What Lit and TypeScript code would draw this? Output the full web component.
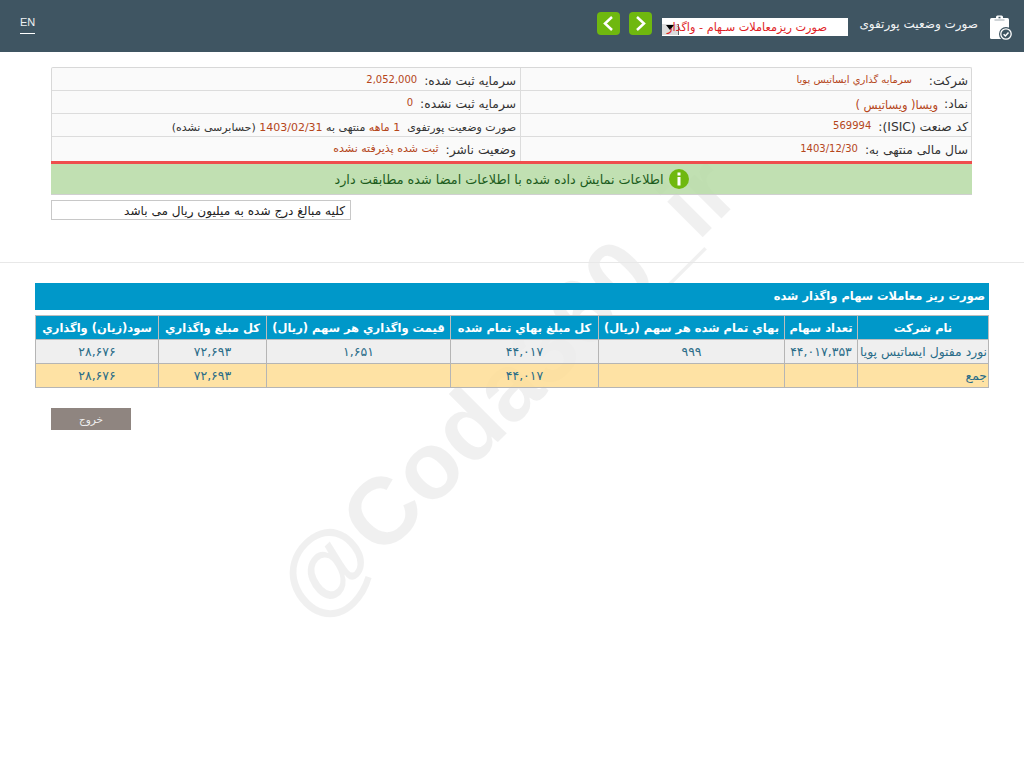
import { LitElement, html, css } from "lit";
import { customElement } from "lit/decorators.js";

const FONT = css`"DejaVu Sans", "Noto Sans", sans-serif`;

const info: [any, any][] = [
  [
    html`<span class="lb">شرکت:</span><span class="val far">سرمایه گذاري ایساتیس پویا</span>`,
    html`<span class="lb">سرمایه ثبت شده:</span><span class="val num" dir="ltr">2,052,000</span>`,
  ],
  [
    html`<span class="lb">نماد:</span><span class="val low">ویسا( ویساتیس )</span>`,
    html`<span class="lb">سرمایه ثبت نشده:</span><span class="val num">0</span>`,
  ],
  [
    html`<span class="lb">کد صنعت (ISIC):</span><span class="val num">569994</span>`,
    html`<span class="tight">صورت وضعیت پورتفوی <span class="red">&nbsp;1 ماهه</span> منتهی به <span class="red">1403/02/31</span> (حسابرسی نشده)</span>`,
  ],
  [
    html`<span class="lb">سال مالی منتهی به:</span><span class="val num" dir="ltr">1403/12/30</span>`,
    html`<span class="lb">وضعیت ناشر:</span><span class="val st">ثبت شده پذیرفته نشده</span>`,
  ],
];

const cols = [131, 73, 186, 148, 184, 108, 123];
const heads = [
  "نام شرکت",
  "تعداد سهام",
  "بهاي تمام شده هر سهم (ریال)",
  "کل مبلغ بهاي تمام شده",
  "قیمت واگذاري هر سهم (ریال)",
  "کل مبلغ واگذاري",
  "سود(زیان) واگذاري",
];
const row1 = ["نورد مفتول ایساتیس پویا", "۴۴,۰۱۷,۳۵۳", "۹۹۹", "۴۴,۰۱۷", "۱,۶۵۱", "۷۲,۶۹۳", "۲۸,۶۷۶"];
const row2 = ["جمع", "", "", "۴۴,۰۱۷", "", "۷۲,۶۹۳", "۲۸,۶۷۶"];

@customElement("app-root")
export class AppRoot extends LitElement {
  static styles = css`
    :host {
      display: block;
      position: relative;
      height: 768px;
      overflow: hidden;
      background: #fff;
      font-family: ${FONT};
      direction: rtl;
      color: #333;
    }
    header {
      position: relative;
      z-index: 1;
      height: 52px;
      background: #3f5562;
      display: flex;
      align-items: flex-start;
      padding: 0 13px 0 20px;
      color: #fff;
    }
    .clip { margin: 15px 0 0 0; width: 22px; height: 25px; overflow: visible; flex: none; }
    .title { margin: 17px 11px 0 0; font-size: 12px; line-height: 14px; width: 130px; color: #f2f4f5; white-space: nowrap; }
    .select {
      margin: 18px 0 0 0;
      width: 186px;
      height: 18px;
      background: #fff;
      position: relative;
      white-space: nowrap;
    }
    .seltext {
      position: absolute;
      right: 21px;
      top: 0;
      color: #e01b24;
      font-size: 11.3px;
      line-height: 20px;
      z-index: 1;
    }
    .arrow {
      position: absolute;
      left: 0;
      top: 6px;
      width: 16px;
      height: 11px;
      background: #dcdcdc;
      border-right: 1px solid #666;
    }
    .arrow::after {
      content: "";
      position: absolute;
      left: 4px;
      top: 1px;
      border: 4px solid transparent;
      border-top: 5px solid #000;
      border-bottom: 0;
    }
    .nav { margin: 12px 10px 0 0; width: 23px; height: 23px; border-radius: 4px; background: #6fb80f; display: flex; align-items: center; justify-content: center; }
    .nav + .nav { margin-right: 9px; }
    .en { margin-right: auto; margin-top: 15px; font-size: 11px; line-height: 15px; padding-bottom: 3px; border-bottom: 1px solid #fff; color: #eef1f2; font-family: "Liberation Sans", sans-serif; height: 15px; }

    .wrap { position: relative; z-index: 1; padding: 15px 52px 0 51px; }
    .info { border: 1px solid #d8d8d8; border-bottom: 0; border-radius: 2px 2px 0 0; background: #fafafa; }
    .irow { display: grid; grid-template-columns: 450px 1fr; height: 23px; border-bottom: 1px solid #dcdcdc; box-sizing: border-box; }
    .irow:last-child { height: 24px; border-bottom: 0; }
    .cell { padding: 5px 3px 0 0; white-space: nowrap; line-height: 14px; }
    .cell + .cell { border-right: 1px solid #dcdcdc; padding-right: 4px; }
    .lb { color: #333; font-size: 12.3px; }
    .val { color: #b5461a; margin-right: 7px; font-size: 10px; position: relative; top: -2px; }
    .val.far { margin-right: 17px; }
    .val.low { top: 1px; font-size: 11.5px; margin-right: 6px; }
    .val.st { font-size: 11px; }
    .tight { font-size: 11px; }
    .red { color: #b5461a; }
    .msg {
      height: 34px;
      box-sizing: border-box;
      border-top: 3px solid #ef4d4d;
      background: rgba(182, 218, 164, 0.85);
      border-bottom: 1px solid #d0d0d0;
      color: #1c5c1c;
      font-size: 12.8px;
      display: flex;
      align-items: center;
      justify-content: center;
      gap: 5px;
    }
    .dot { width: 20px; height: 20px; }
    .note {
      margin-top: 5px;
      margin-right: 621px;
      height: 20px;
      box-sizing: border-box;
      border: 1px solid #c8c8c8;
      font-size: 12.1px;
      line-height: 20px;
      padding-right: 5px;
      color: #222;
      white-space: nowrap;
    }
    hr { position: relative; z-index: 1; margin: 42px 0 0; border: 0; border-top: 1px solid #e8e8e8; }
    .sec { position: relative; z-index: 1; margin: 20px 35px 0 35px; }
    .sect { height: 27px; background: #0098c9; color: #fff; font-weight: bold; font-size: 11.5px; line-height: 27px; padding-right: 4px; }
    table { margin-top: 5px; width: 953px; border-collapse: collapse; table-layout: fixed; border: 1px solid #bdbdbd; }
    th { background: #0098c9; color: #fff; font-size: 11.5px; height: 23px; padding: 0; border: 1px solid #bdbdbd; white-space: nowrap; overflow: hidden; }
    td { height: 23px; padding: 0 1px; text-align: center; font-size: 12.5px; color: #2a6c88; border: 1px solid #b5b5b5; white-space: nowrap; overflow: hidden; }
    tr.a td { background: rgba(236, 236, 236, 0.85); }
    tr.b td { background: rgba(254, 221, 148, 0.85); }
    td.s { text-align: right; font-size: 12.4px; }
    .exit { position: relative; z-index: 1; margin: 20px 893px 0 0; width: 80px; height: 22px; background: #8f8580; color: #eee; font-size: 10.5px; line-height: 22px; text-align: center; }
    .mark {
      position: absolute;
      z-index: 0;
      left: 506px;
      top: 388px;
      transform: translate(-50%, -50%) rotate(-45deg);
      font: bold 95px "Liberation Sans", sans-serif;
      color: rgba(0, 0, 0, 0.06);
      direction: ltr;
      white-space: nowrap;
      pointer-events: none;
    }
  `;

  render() {
    return html`
      <header>
        <svg class="clip" viewBox="0 0 22 25">
          <rect x="1" y="3" width="19" height="21" rx="1.500" fill="#fff"/>
          <rect x="7" y="0.500" width="7" height="4" rx="1.500" fill="#fff"/>
          <rect x="9.500" y="1.800" width="2" height="1.500" fill="#3f5562"/>
          <rect x="5.500" y="4.500" width="10" height="1" fill="#3f5562" opacity="0.5"/>
          <circle cx="17" cy="19" r="7" fill="#3f5562"/>
          <circle cx="17" cy="19" r="5.200" fill="#3f5562" stroke="#fff" stroke-width="1.300"/>
          <path d="M14.600 19.200l1.800 1.800 3.100-3.400" fill="none" stroke="#fff" stroke-width="1.500"/>
        </svg>
        <div class="title">صورت وضعیت پورتفوی</div>
        <div class="select"><span class="arrow"></span><span class="seltext">صورت ریزمعاملات سـهام - واگذار</span></div>
        <div class="nav">
          <svg width="13" height="17" viewBox="0 0 13 17"><path d="M3 2l7 6.500-7 6.500" fill="none" stroke="#fff" stroke-width="2.500"/></svg>
        </div>
        <div class="nav">
          <svg width="13" height="17" viewBox="0 0 13 17"><path d="M10 2L3 8.500l7 6.500" fill="none" stroke="#fff" stroke-width="2.500"/></svg>
        </div>
        <div class="en">EN</div>
      </header>
      <div class="wrap">
        <div class="info">
          ${info.map(
            (r) => html`<div class="irow"><div class="cell">${r[0]}</div><div class="cell">${r[1]}</div></div>`
          )}
        </div>
        <div class="msg">
          <svg class="dot" viewBox="0 0 20 20">
            <circle cx="10" cy="10" r="10" fill="#6fb80f"/>
            <rect x="8.500" y="3.500" width="3" height="3" fill="#fff"/>
            <rect x="8.500" y="8" width="3" height="8.500" fill="#fff"/>
          </svg>
          <span>اطلاعات نمایش داده شده با اطلاعات امضا شده مطابقت دارد</span>
        </div>
        <div class="note">کلیه مبالغ درج شده به میلیون ریال می باشد</div>
      </div>
      <hr />
      <div class="sec">
        <div class="sect">صورت ریز معاملات سهام واگذار شده</div>
        <table>
          <colgroup>${cols.map((w) => html`<col style="width:${w}px" />`)}</colgroup>
          <tr>${heads.map((h) => html`<th>${h}</th>`)}</tr>
          <tr class="a">${row1.map((c, i) => html`<td class=${i === 0 ? "s" : ""}>${c}</td>`)}</tr>
          <tr class="b">${row2.map((c, i) => html`<td class=${i === 0 ? "s" : ""}>${c}</td>`)}</tr>
        </table>
      </div>
      <div class="exit">خروج</div>
      <div class="mark">@Coda360_ir</div>
    `;
  }
}
